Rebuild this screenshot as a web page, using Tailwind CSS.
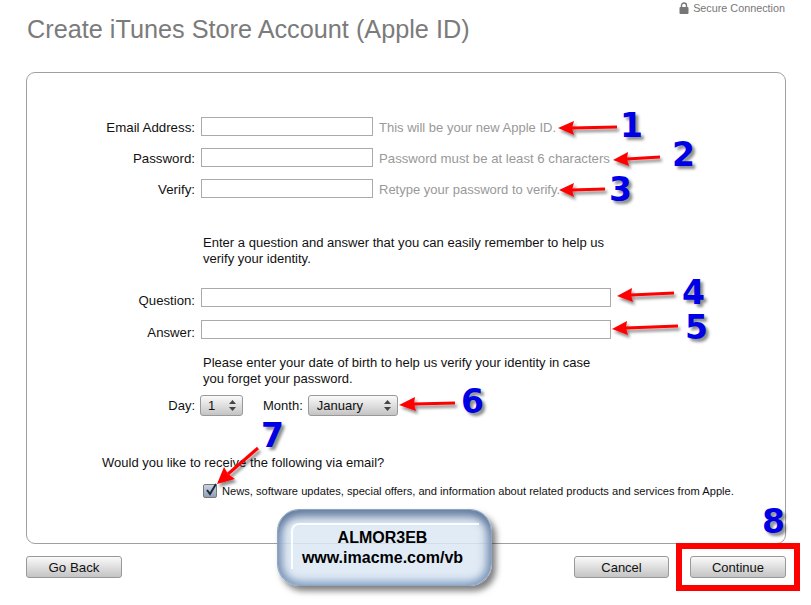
<!DOCTYPE html>
<html lang="en">
<head>
    <meta charset="UTF-8">
    <meta name="viewport" content="width=device-width, initial-scale=1.0">
    <title>Create iTunes Store Account</title>
    <script src="https://cdn.jsdelivr.net/npm/@tailwindcss/browser@4"></script>
</head>
<body class="bg-white">
<div class="relative w-[811px] h-[605px] overflow-hidden bg-white font-['Liberation_Sans',Arial,sans-serif] text-[13px] text-[#111]">

    <!-- header -->
    <div class="flex justify-end items-center gap-[4px] h-[16px] pr-[26px] text-[10.8px] text-[#777]">
        <svg width="10" height="12" viewBox="0 0 10 12"><path d="M2.5 5V3.5a2.5 2.5 0 0 1 5 0V5" fill="none" stroke="#777" stroke-width="1.4"/><rect x="0.5" y="5" width="9" height="7" rx="1" fill="#777"/></svg>
        <span>Secure Connection</span>
    </div>
    <h1 class="pl-[27px] mt-[-1px] h-[57px] text-[25.25px] leading-[28px] text-[#7b7b7b]">Create iTunes Store Account (Apple ID)</h1>

    <!-- form card -->
    <div class="ml-[26px] w-[760px] h-[472px] border border-[#a0a0a0] rounded-[9px] pt-[44px]">
        <div class="flex flex-col gap-[12px]">
            <div class="flex items-center h-[19px]">
                <label class="w-[168px] mr-[6px] pt-[2px] text-right text-[13.3px]">Email Address:</label>
                <input type="text" class="w-[172px] h-[19px] border border-[#aaa] bg-white">
                <span class="ml-[6px] pt-[2px] text-[#999]">This will be your new Apple ID.</span>
            </div>
            <div class="flex items-center h-[19px]">
                <label class="w-[168px] mr-[6px] pt-[2px] text-right text-[13.3px]">Password:</label>
                <input type="password" class="w-[172px] h-[19px] border border-[#aaa] bg-white">
                <span class="ml-[6px] pt-[2px] text-[#999] text-[13.2px]">Password must be at least 6 characters</span>
            </div>
            <div class="flex items-center h-[19px]">
                <label class="w-[168px] mr-[6px] pt-[2px] text-right text-[13.3px]">Verify:</label>
                <input type="password" class="w-[172px] h-[19px] border border-[#aaa] bg-white">
                <span class="ml-[6px] pt-[2px] text-[#999]">Retype your password to verify.</span>
            </div>
        </div>

        <p class="ml-[176px] mt-[37px] w-[420px] leading-[16px] text-[13.05px]">Enter a question and answer that you can easily remember to help us verify your identity.</p>

        <div class="flex flex-col gap-[13px] mt-[21px]">
            <div class="flex items-center h-[19px]">
                <label class="w-[168px] mr-[6px] pt-[7px] text-right text-[13.2px]">Question:</label>
                <input type="text" class="w-[410px] h-[19px] border border-[#aaa] bg-white">
            </div>
            <div class="flex items-center h-[19px]">
                <label class="w-[168px] mr-[6px] pt-[6px] text-right text-[13.2px]">Answer:</label>
                <input type="text" class="w-[410px] h-[19px] border border-[#aaa] bg-white">
            </div>
        </div>

        <p class="ml-[176px] mt-[16px] w-[408px] leading-[16px]">Please enter your date of birth to help us verify your identity in case you forget your password.</p>

        <div class="flex items-center h-[22px] mt-[7px]">
            <label class="w-[168px] mr-[5px] pt-[2px] text-right">Day:</label>
            <div class="relative w-[43px] h-[21px]">
                <select class="w-full h-full appearance-none border border-[#999] rounded-[3px] bg-gradient-to-b from-[#fafafa] to-[#c4c4c4] pl-[7px] text-[13px]"><option>1</option></select>
                <svg class="absolute right-[7px] top-[5px]" width="7" height="11" viewBox="0 0 7 11"><path d="M3.5 0L7 4H0zM3.5 11L0 7h7z" fill="#444"/></svg>
            </div>
            <label class="ml-[20px] mr-[5px] pt-[2px]">Month:</label>
            <div class="relative w-[90px] h-[21px]">
                <select class="w-full h-full appearance-none border border-[#999] rounded-[3px] bg-gradient-to-b from-[#fafafa] to-[#c4c4c4] pl-[8px] text-[13px]"><option>January</option></select>
                <svg class="absolute right-[7px] top-[5px]" width="7" height="11" viewBox="0 0 7 11"><path d="M3.5 0L7 4H0zM3.5 11L0 7h7z" fill="#444"/></svg>
            </div>
        </div>

        <p class="ml-[75px] mt-[39px] leading-[16px]">Would you like to receive the following via email?</p>

        <div class="flex items-center ml-[176px] mt-[12px]">
            <div class="relative w-[14px] h-[14px]">
                <input type="checkbox" checked class="appearance-none block w-[14px] h-[14px] border border-[#777] rounded-[2px] bg-gradient-to-b from-[#c9d3e2] to-[#8fa0b8]">
                <svg class="absolute left-[1px] top-[-2px]" width="14" height="15" viewBox="0 0 14 15"><path d="M3 8l3 4 6-10" fill="none" stroke="#1c2a3a" stroke-width="2"/></svg>
            </div>
            <span class="ml-[5px] text-[11.13px]">News, software updates, special offers, and information about related products and services from Apple.</span>
        </div>
    </div>

    <!-- bottom buttons -->
    <div class="flex items-center ml-[26px] w-[760px] mt-[12px]">
        <button class="w-[96px] h-[22px] pt-[1px] border border-[#999] rounded-[3px] bg-gradient-to-b from-[#fafafa] to-[#c4c4c4] text-[13.3px]">Go Back</button>
        <button class="ml-auto w-[95px] h-[22px] pt-[1px] border border-[#999] rounded-[3px] bg-gradient-to-b from-[#fafafa] to-[#c4c4c4] text-[13px]">Cancel</button>
        <button class="ml-[21px] w-[96px] h-[22px] pt-[1px] border border-[#999] rounded-[3px] bg-gradient-to-b from-[#fafafa] to-[#c4c4c4] text-[13px]">Continue</button>
    </div>

    <!-- annotations drawn over the screenshot -->
    <svg class="absolute left-0 top-0 pointer-events-none" width="811" height="605" viewBox="0 0 811 605">
        <defs>
            <filter id="soft" x="-20%" y="-60%" width="140%" height="240%"><feDropShadow dx="2" dy="3" stdDeviation="1.5" flood-color="#000" flood-opacity="0.45"/></filter>
        </defs>
        <g stroke="#f00" stroke-width="3" fill="#f00" filter="url(#soft)">
            <path d="M617 127L572 128"/>
            <path stroke="none" d="M558 128L574 121L572 128L574 135z"/>
            <path d="M660 157L627 159"/>
            <path stroke="none" d="M613 160L628 152L627 159L629 166z"/>
            <path d="M605 189L572 190"/>
            <path stroke="none" d="M559 190L574 183L572 190L574 197z"/>
            <path d="M674 293L631 295"/>
            <path stroke="none" d="M617 296L632 288L631 295L633 302z"/>
            <path d="M678 326L626 328"/>
            <path stroke="none" d="M612 329L627 321L626 328L628 335z"/>
            <path d="M455 403L414 404"/>
            <path stroke="none" d="M399 405L415 397L414 404L416 411z"/>
            <path d="M258 448L228 474"/>
            <path stroke="none" d="M217 484L224 467L228 474L235 479z"/>
        </g>
    </svg>

    <div class="absolute left-[620px] top-[113px] text-[33px] leading-[26px] font-bold text-[#0000e6] font-['DejaVu_Sans',sans-serif] [text-shadow:3px_3px_3px_rgba(0,0,0,0.45)]">1</div>
    <div class="absolute left-[672px] top-[142px] text-[33px] leading-[26px] font-bold text-[#0000e6] font-['DejaVu_Sans',sans-serif] [text-shadow:3px_3px_3px_rgba(0,0,0,0.45)]">2</div>
    <div class="absolute left-[609px] top-[177px] text-[33px] leading-[26px] font-bold text-[#0000e6] font-['DejaVu_Sans',sans-serif] [text-shadow:3px_3px_3px_rgba(0,0,0,0.45)]">3</div>
    <div class="absolute left-[682px] top-[280px] text-[33px] leading-[26px] font-bold text-[#0000e6] font-['DejaVu_Sans',sans-serif] [text-shadow:3px_3px_3px_rgba(0,0,0,0.45)]">4</div>
    <div class="absolute left-[685px] top-[315px] text-[33px] leading-[26px] font-bold text-[#0000e6] font-['DejaVu_Sans',sans-serif] [text-shadow:3px_3px_3px_rgba(0,0,0,0.45)]">5</div>
    <div class="absolute left-[461px] top-[389px] text-[33px] leading-[26px] font-bold text-[#0000e6] font-['DejaVu_Sans',sans-serif] [text-shadow:3px_3px_3px_rgba(0,0,0,0.45)]">6</div>
    <div class="absolute left-[261px] top-[423px] text-[33px] leading-[26px] font-bold text-[#0000e6] font-['DejaVu_Sans',sans-serif] [text-shadow:3px_3px_3px_rgba(0,0,0,0.45)]">7</div>
    <div class="absolute left-[762px] top-[509px] text-[33px] leading-[26px] font-bold text-[#0000e6] font-['DejaVu_Sans',sans-serif] [text-shadow:3px_3px_3px_rgba(0,0,0,0.45)]">8</div>

    <!-- red box around Continue -->
    <div class="absolute left-[676px] top-[543px] w-[124px] h-[48px] border-[6px] border-[#f00]"></div>

    <!-- watermark -->
    <div class="absolute left-[277px] top-[509px] w-[215px] h-[77px] rounded-[22px] bg-[#dce7f5]/85 border border-[#8ea6c4] shadow-[4px_5px_6px_rgba(0,0,0,0.5),inset_0_10px_8px_-3px_rgba(90,115,150,0.85),inset_0_-6px_8px_-2px_rgba(120,150,190,0.7),inset_8px_0_8px_-3px_rgba(110,135,170,0.7),inset_-8px_0_8px_-3px_rgba(110,135,170,0.7)] flex flex-col items-center justify-center pr-[4px] font-bold text-[16px] leading-[20px] text-black">
        <div class="absolute left-[13px] top-[13px] w-[188px] h-[46px] border-t-2 border-l-2 border-white/90 rounded-tl-[8px]"></div>
        <span>ALMOR3EB</span>
        <span>www.imacme.com/vb</span>
    </div>
</div>
</body>
</html>
